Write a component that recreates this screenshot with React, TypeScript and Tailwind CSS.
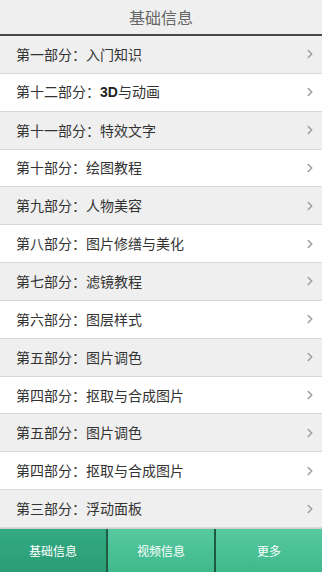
import { ChevronRight } from "lucide-react";

const rows = [
  "第一部分：入门知识",
  "第十二部分：3D与动画",
  "第十一部分：特效文字",
  "第十部分：绘图教程",
  "第九部分：人物美容",
  "第八部分：图片修缮与美化",
  "第七部分：滤镜教程",
  "第六部分：图层样式",
  "第五部分：图片调色",
  "第四部分：抠取与合成图片",
  "第五部分：图片调色",
  "第四部分：抠取与合成图片",
  "第三部分：浮动面板",
];

const tabs = ["基础信息", "视频信息", "更多"];

function RowText({ text }: { text: string }) {
  // "3D" is drawn in a bolder latin face in the original
  const parts = text.split(/(3D)/);
  return (
    <span>
      {parts.map((p, i) =>
        p === "3D" ? (
          <span key={i} className="font-['Liberation_Sans',sans-serif] font-bold text-[#222]">
            {p}
          </span>
        ) : (
          <span key={i}>{p}</span>
        )
      )}
    </span>
  );
}

export default function App() {
  return (
    <div className="flex h-[572px] w-[322px] flex-col overflow-hidden bg-white font-['Noto_Sans_CJK_SC',sans-serif]">
      {/* header */}
      <div className="flex h-[36px] shrink-0 items-center justify-center border-b-2 border-[#4a4a4a] bg-[#efefef]">
        <span className="text-[16px] text-[#666]">基础信息</span>
      </div>

      {/* list */}
      <div className="flex flex-1 flex-col">
        {rows.map((r, i) => (
          <div
            key={i}
            className={`flex flex-1 items-center justify-between border-b border-[#d8d8d8] pl-[16px] pr-[5px] text-[14px] text-[#333] ${
              i % 2 === 0 ? "bg-[#efefef]" : "bg-white"
            }`}
          >
            <RowText text={r} />
            <ChevronRight size={14} strokeWidth={2.75} className="text-[#a0a0a0]" />
          </div>
        ))}
      </div>

      {/* tab bar */}
      <div className="flex h-[44px] shrink-0 border-t border-[#cfcfcf]">
        {tabs.map((t, i) => (
          <div
            key={t}
            className={`flex flex-1 items-center justify-center text-[12px] text-white ${
              i === 0
                ? "bg-gradient-to-b from-[#33ab82] to-[#2c9c76]"
                : "bg-gradient-to-b from-[#56c9a0] to-[#3fb88c]"
            } ${i > 0 ? "border-l-2 border-[#1f5a45]" : ""}`}
          >
            {t}
          </div>
        ))}
      </div>
    </div>
  );
}
